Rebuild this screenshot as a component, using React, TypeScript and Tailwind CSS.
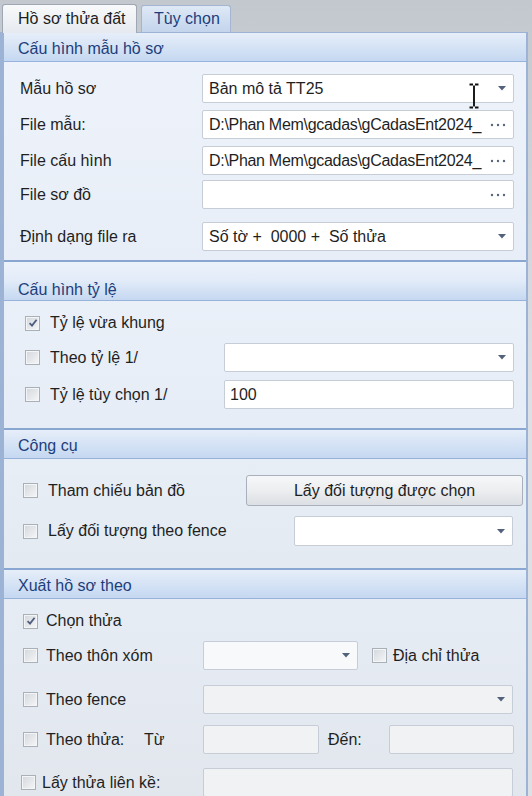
import React from "react";

function Check({ checked }: { checked?: boolean }) {
  return (
    <span className="w-[15px] h-[15px] shrink-0 border border-[#aab0b8] bg-[#f4f5f7] flex items-center justify-center">
      <span className="w-[11px] h-[11px] bg-gradient-to-br from-[#d5d9de] to-[#f3f4f6] flex items-center justify-center">
        {checked && (
          <svg width="10" height="10" viewBox="0 0 10 10">
            <path d="M1.6 5.2 L4 7.6 L8.6 1.8" stroke="#4e5d7d" strokeWidth="1.8" fill="none" />
          </svg>
        )}
      </span>
    </span>
  );
}

function Arrow() {
  return (
    <svg width="8" height="5" viewBox="0 0 8 5" className="shrink-0">
      <path d="M0 0 H8 L4 4.5 Z" fill="#53627c" />
    </svg>
  );
}

function Dots() {
  return (
    <svg width="16" height="4" viewBox="0 0 16 4" className="shrink-0">
      <circle cx="2" cy="2" r="1.2" fill="#59657a" />
      <circle cx="8" cy="2" r="1.2" fill="#59657a" />
      <circle cx="14" cy="2" r="1.2" fill="#59657a" />
    </svg>
  );
}

function Header({ title, tall }: { title: string; tall?: boolean }) {
  return (
    <div
      className={
        tall
          ? "h-[39px] border-b border-[#97b3dc] bg-gradient-to-b from-[#edf3fb] via-[#e2ebf8] to-[#c5d8f1] flex items-center pl-[14px] pt-[17px] text-[#1d3e7c]"
          : "h-[29px] border-b border-[#97b3dc] bg-gradient-to-b from-[#e6eef9] to-[#c5d8f1] flex items-center pl-[14px] pt-[3px] text-[#1d3e7c]"
      }
    >
      {title}
    </div>
  );
}

export default function App() {
  return (
    <div className="relative w-[532px] h-[796px] overflow-hidden bg-gradient-to-b from-[#c3c8cf] via-[#dde1e6] to-[#dde1e6] font-['Liberation_Sans',Arial,sans-serif] text-[16px] text-[#1f1f1f] leading-none">
      {/* tabs */}
      <div className="h-[32px] flex items-end pl-[2px] gap-[4px]">
        <div className="relative z-10 h-[29px] -mb-px w-[135px] border border-b-0 border-[#9ea7b3] rounded-t-[3px] bg-gradient-to-b from-[#f8f9fa] to-[#e6eaf0] flex items-center pl-[15px] text-[#1e1e1e]">
          Hồ sơ thửa đất
        </div>
        <div className="h-[27px] w-[90px] border border-b-0 border-[#a3b5d0] rounded-t-[3px] bg-gradient-to-b from-[#dfe9f6] to-[#c3d4ec] flex items-center pl-[12px] text-[#1d3e7c]">
          Tùy chọn
        </div>
      </div>

      {/* panel */}
      <div className="w-[528px] h-[764px] border-t border-l-[4px] border-r-[2px] border-[#9cb3d5] bg-[#e9eff7]">
        {/* section 1 */}
        <div className="bg-gradient-to-b from-[#eef3fb] to-[#e8eef7]">
          <Header title="Cấu hình mẫu hồ sơ" />
          <div className="pl-[16px] pb-[9px]">
            <div className="flex items-center h-[29px] mt-[12px]">
              <span className="w-[182px]">Mẫu hồ sơ</span>
              <div className="relative w-[312px] h-[29px] bg-white border border-[#c6cdd7] rounded-[2px] flex items-center pl-[6px] pr-[7px]">
                <span className="flex-1">Bản mô tả TT25</span>
                <Arrow />
                <svg width="16" height="27" viewBox="0 0 16 27" className="absolute left-[263px] top-[8px]">
                  <path d="M3.5 1.5 H7 M9 1.5 H12.5 M8 2.5 V23.5 M3.5 24.5 H7 M9 24.5 H12.5" stroke="#111" strokeWidth="1.9" fill="none" />
                </svg>
              </div>
            </div>
            <div className="flex items-center h-[29px] mt-[7px]">
              <span className="w-[182px]">File mẫu:</span>
              <div className="w-[312px] h-[29px] bg-white border border-[#c6cdd7] rounded-[2px] flex items-center pl-[6px] pr-[7px]">
                <span className="flex-1 whitespace-nowrap tracking-[-0.3px]">D:\Phan Mem\gcadas\gCadasEnt2024_</span>
                <Dots />
              </div>
            </div>
            <div className="flex items-center h-[29px] mt-[7px]">
              <span className="w-[182px]">File cấu hình</span>
              <div className="w-[312px] h-[29px] bg-white border border-[#c6cdd7] rounded-[2px] flex items-center pl-[6px] pr-[7px]">
                <span className="flex-1 whitespace-nowrap tracking-[-0.3px]">D:\Phan Mem\gcadas\gCadasEnt2024_</span>
                <Dots />
              </div>
            </div>
            <div className="flex items-center h-[29px] mt-[5px]">
              <span className="w-[182px]">File sơ đồ</span>
              <div className="w-[312px] h-[29px] bg-white border border-[#c6cdd7] rounded-[2px] flex items-center justify-end pl-[6px] pr-[7px]">
                <Dots />
              </div>
            </div>
            <div className="flex items-center h-[29px] mt-[13px]">
              <span className="w-[182px]">Định dạng file ra</span>
              <div className="w-[312px] h-[29px] bg-white border border-[#c6cdd7] rounded-[2px] flex items-center pl-[6px] pr-[7px]">
                <span className="flex-1 whitespace-pre">Số tờ +  0000 +  Số thửa</span>
                <Arrow />
              </div>
            </div>
          </div>
        </div>

        {/* section 2 */}
        <div className="border-t-2 border-[#8aa7d1] bg-gradient-to-b from-[#ebf1f9] to-[#e6edf6]">
          <Header title="Cấu hình tỷ lệ" tall />
          <div className="pl-[21px] pb-[19px]">
            <div className="flex items-center h-[28px] mt-[8px]">
              <Check checked />
              <span className="ml-[10px]">Tỷ lệ vừa khung</span>
            </div>
            <div className="flex items-center h-[29px] mt-[6px]">
              <div className="w-[199px] flex items-center">
                <Check />
                <span className="ml-[10px]">Theo tỷ lệ 1/</span>
              </div>
              <div className="w-[290px] h-[29px] bg-white border border-[#c6cdd7] rounded-[2px] flex items-center justify-end pr-[7px]">
                <Arrow />
              </div>
            </div>
            <div className="flex items-center h-[29px] mt-[8px]">
              <div className="w-[199px] flex items-center">
                <Check />
                <span className="ml-[10px]">Tỷ lệ tùy chọn 1/</span>
              </div>
              <div className="w-[290px] h-[29px] bg-white border border-[#c6cdd7] rounded-[2px] flex items-center pl-[5px]">
                100
              </div>
            </div>
          </div>
        </div>

        {/* section 3 */}
        <div className="border-t-2 border-[#8aa7d1] bg-gradient-to-b from-[#e9eff7] to-[#e4eaf2]">
          <Header title="Công cụ" />
          <div className="pl-[19px] pb-[22px]">
            <div className="flex items-center h-[31px] mt-[16px]">
              <div className="w-[223px] flex items-center">
                <Check />
                <span className="ml-[10px]">Tham chiếu bản đồ</span>
              </div>
              <div className="w-[277px] h-[31px] border border-[#a9b0bb] rounded-[3px] bg-gradient-to-b from-[#f6f7f8] via-[#eceef0] to-[#dcdfe3] flex items-center justify-center pt-[1px]">
                Lấy đối tượng được chọn
              </div>
            </div>
            <div className="flex items-center h-[30px] mt-[10px]">
              <div className="w-[271px] flex items-center">
                <Check />
                <span className="ml-[10px]">Lấy đối tượng theo fence</span>
              </div>
              <div className="w-[219px] h-[30px] bg-white border border-[#c6cdd7] rounded-[2px] flex items-center justify-end pr-[7px]">
                <Arrow />
              </div>
            </div>
          </div>
        </div>

        {/* section 4 */}
        <div className="border-t-2 border-[#8aa7d1] bg-gradient-to-b from-[#e7edf5] to-[#e2e7ee] h-[230px]">
          <Header title="Xuất hồ sơ theo" />
          <div className="pl-[19px]">
            <div className="flex items-center h-[28px] mt-[8px]">
              <Check checked />
              <span className="ml-[8px]">Chọn thửa</span>
            </div>
            <div className="flex items-center h-[29px] mt-[6px]">
              <div className="w-[180px] flex items-center">
                <Check />
                <span className="ml-[8px]">Theo thôn xóm</span>
              </div>
              <div className="w-[155px] h-[29px] bg-[#f8f9fa] border border-[#c6cdd7] rounded-[2px] flex items-center justify-end pr-[7px]">
                <Arrow />
              </div>
              <span className="ml-[14px]"><Check /></span>
              <span className="ml-[6px]">Địa chỉ thửa</span>
            </div>
            <div className="flex items-center h-[29px] mt-[15px]">
              <div className="w-[180px] flex items-center">
                <Check />
                <span className="ml-[8px]">Theo fence</span>
              </div>
              <div className="w-[310px] h-[29px] bg-[#f1f2f4] border border-[#c6cdd7] rounded-[2px] flex items-center justify-end pr-[7px]">
                <Arrow />
              </div>
            </div>
            <div className="flex items-center h-[29px] mt-[11px]">
              <div className="w-[180px] flex items-center">
                <Check />
                <span className="ml-[8px] w-[98px]">Theo thửa:</span>
                <span>Từ</span>
              </div>
              <div className="w-[116px] h-[29px] bg-[#f1f2f4] border border-[#c6cdd7] rounded-[2px]" />
              <span className="ml-[9px] w-[61px]">Đến:</span>
              <div className="w-[125px] h-[29px] bg-[#f1f2f4] border border-[#c6cdd7] rounded-[2px]" />
            </div>
            <div className="flex items-center h-[29px] mt-[14px] -ml-[2px]">
              <div className="w-[182px] flex items-center">
                <Check />
                <span className="ml-[6px]">Lấy thửa liên kề:</span>
              </div>
              <div className="w-[310px] h-[29px] bg-[#f1f2f4] border border-[#c6cdd7] rounded-[2px]" />
            </div>
          </div>
        </div>
      </div>
    </div>
  );
}
